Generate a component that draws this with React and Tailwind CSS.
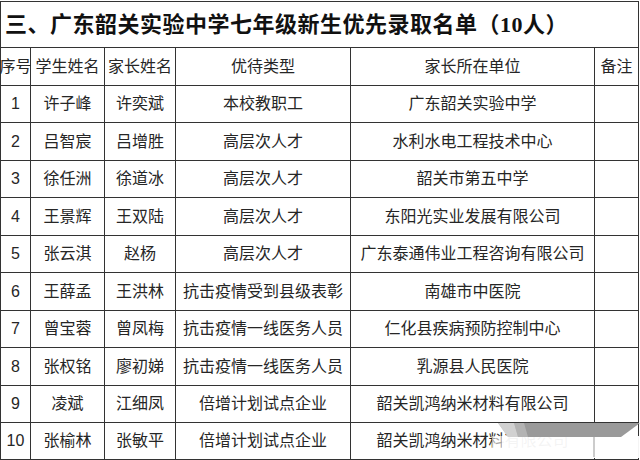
const rows = [
  ['1', '许子峰', '许奕斌', '本校教职工', '广东韶关实验中学'],
  ['2', '吕智宸', '吕增胜', '高层次人才', '水利水电工程技术中心'],
  ['3', '徐任洲', '徐道冰', '高层次人才', '韶关市第五中学'],
  ['4', '王景辉', '王双陆', '高层次人才', '东阳光实业发展有限公司'],
  ['5', '张云淇', '赵杨', '高层次人才', '广东泰通伟业工程咨询有限公司'],
  ['6', '王薛孟', '王洪林', '抗击疫情受到县级表彰', '南雄市中医院'],
  ['7', '曾宝蓉', '曾凤梅', '抗击疫情一线医务人员', '仁化县疾病预防控制中心'],
  ['8', '张权铭', '廖初娣', '抗击疫情一线医务人员', '乳源县人民医院'],
  ['9', '凌斌', '江细凤', '倍增计划试点企业', '韶关凯鸿纳米材料有限公司'],
  ['10', '张榆林', '张敏平', '倍增计划试点企业', '韶关凯鸿纳米材料有限公司'],
];

const heights = ['h-[37px]', 'h-[38px]', 'h-[37px]', 'h-[38px]', 'h-[37px]', 'h-[38px]', 'h-[37px]', 'h-[38px]', 'h-[37px]', 'h-[37px]'];

const cell = 'flex items-center justify-center border-r border-b border-[#333] whitespace-nowrap overflow-visible';

export default function App() {
  return (
    <div className="relative w-[640px] h-[460px] bg-white overflow-hidden pt-px text-[#262626] text-[16px]" style={{ fontFamily: '"Liberation Sans", "Noto Sans CJK SC", sans-serif' }}>
      <div className="w-[639px] border-l border-t border-[#333] grid grid-cols-[30px_74px_71px_175px_244px_44px]">
        <div className="col-span-6 h-[46px] border-r border-b border-[#333] flex items-center pl-[4px] text-[22px] font-bold text-[#111] tracking-[0.5px]" style={{ fontFamily: '"Liberation Serif", "Noto Sans CJK SC", serif' }}>
          三、广东韶关实验中学七年级新生优先录取名单（10人）
        </div>

        <div className={`${cell} h-[38px]`}>序号</div>
        <div className={`${cell} h-[38px]`}>学生姓名</div>
        <div className={`${cell} h-[38px]`}>家长姓名</div>
        <div className={`${cell} h-[38px]`}>优待类型</div>
        <div className={`${cell} h-[38px]`}>家长所在单位</div>
        <div className={`${cell} h-[38px]`}>备注</div>

        {rows.map((r, i) => (
          <div key={r[0]} className="contents">
            {r.map((v, j) => (
              <div key={j} className={`${cell} ${heights[i]}`}>{v}</div>
            ))}
            <div className={`${cell} ${heights[i]}`}></div>
          </div>
        ))}
      </div>

      {/* watermark smear over the last row */}
      <svg className="absolute z-20 left-[480px] top-[420px]" width="160" height="40" viewBox="0 0 160 40">
        <rect x="22" y="16" width="138" height="22" fill="#ffffff" opacity="0.95" />
        <rect x="12" y="16" width="10" height="22" fill="#ffffff" opacity="0.6" />
        <rect x="113" y="17" width="2" height="20" fill="#cccccc" />
        <polygon points="18,3 160,3 141,17 28,17" fill="#9a9a9a" />
        <polygon points="18,3 34,3 38,17 28,17" fill="#ffffff" opacity="0.55" />
        <polygon points="34,3 44,3 48,17 38,17" fill="#ffffff" opacity="0.25" />
      </svg>
    </div>
  );
}
